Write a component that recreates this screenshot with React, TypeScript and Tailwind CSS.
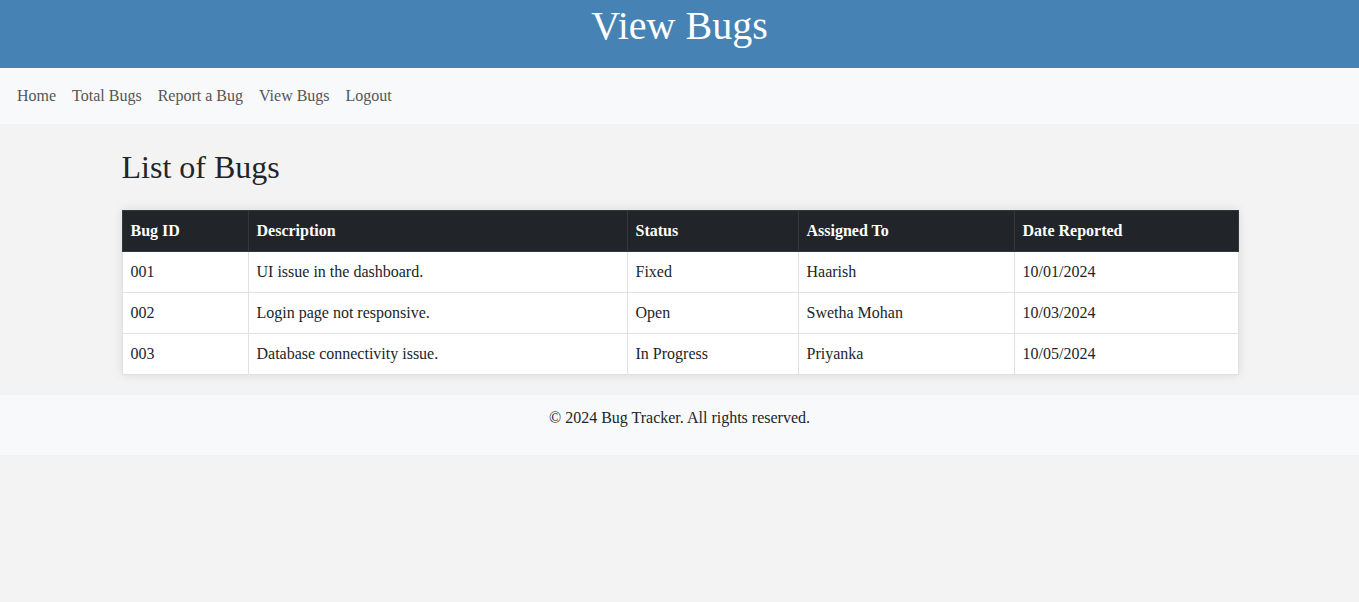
import React from "react";

const rows = [
  ["001", "UI issue in the dashboard.", "Fixed", "Haarish", "10/01/2024"],
  ["002", "Login page not responsive.", "Open", "Swetha Mohan", "10/03/2024"],
  ["003", "Database connectivity issue.", "In Progress", "Priyanka", "10/05/2024"],
];

const widths = ["w-[126px]", "w-[379px]", "w-[171px]", "w-[216px]", "w-[224px]"];

export default function App() {
  return (
    <div className="min-h-[602px] bg-[#f3f3f3] text-[#212529]" style={{ fontFamily: '"Liberation Serif", "Times New Roman", serif' }}>
      <header className="bg-[#4682b4] h-[68px] text-center">
        <h1 className="text-[40px] leading-[48px] text-white pt-[2px]">View Bugs</h1>
      </header>
      <nav className="bg-[#f8f9fa] h-[56px] flex items-center pl-[17px] gap-[16px] text-[16px] text-[#555555]">
        <a>Home</a>
        <a>Total Bugs</a>
        <a>Report a Bug</a>
        <a>View Bugs</a>
        <a>Logout</a>
      </nav>
      <main className="w-[1116px] mx-auto pt-[24px] pb-[20px]">
        <h2 className="text-[32px] leading-[38px] mb-0">List of Bugs</h2>
        <table className="mt-[24px] w-full border-collapse bg-white text-[16px] shadow-[0_0_10px_rgba(0,0,0,0.1)] table-fixed">
          <thead>
            <tr className="bg-[#212529] text-white">
              {["Bug ID", "Description", "Status", "Assigned To", "Date Reported"].map((h, i) => (
                <th key={h} className={`${widths[i]} h-[41px] text-left font-bold px-[8px] border border-[#32383e]`}>{h}</th>
              ))}
            </tr>
          </thead>
          <tbody>
            {rows.map((r) => (
              <tr key={r[0]}>
                {r.map((c, i) => (
                  <td key={i} className="h-[41px] px-[8px] border border-[#dee2e6]">{c}</td>
                ))}
              </tr>
            ))}
          </tbody>
        </table>
      </main>
      <footer className="bg-[#f8f9fa] h-[60px] flex items-start justify-center pt-[11px] text-[16px]">
        © 2024 Bug Tracker. All rights reserved.
      </footer>
    </div>
  );
}
